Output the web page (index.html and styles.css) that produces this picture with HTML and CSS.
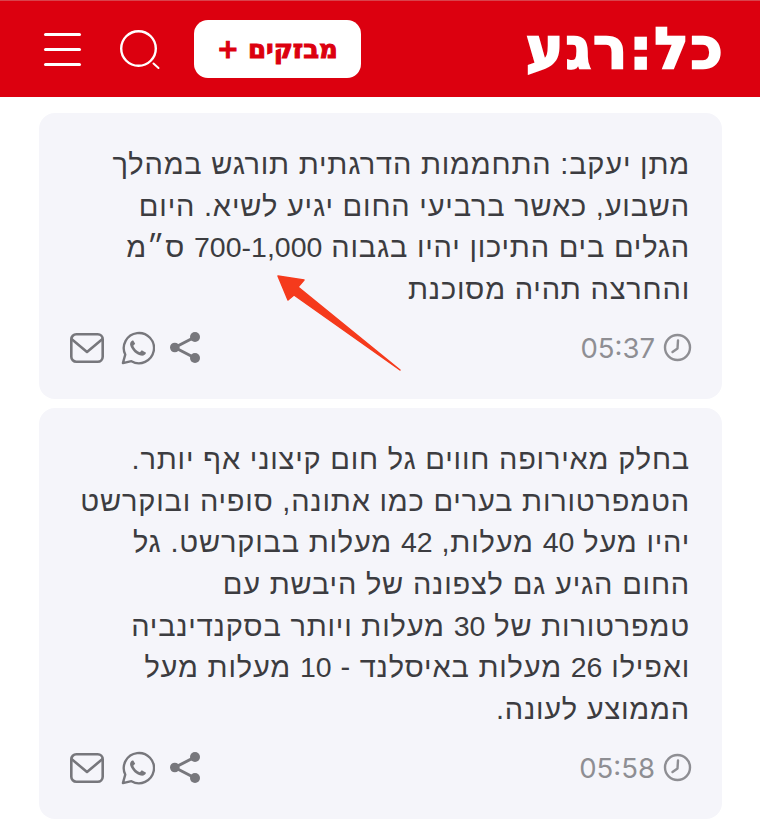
FILE: index.html
```html
<!DOCTYPE html>
<html lang="he" dir="rtl">

<head>
    <meta charset="UTF-8">
    <title>כל:רגע</title>
    <link rel="stylesheet" href="styles.css">
</head>

<body>
    <header class="topbar">
        <div class="logo">כל:רגע</div>
        <div class="topbar-tools">
            <a class="breaking-btn">מבזקים +</a>
            <svg class="search-icon" width="42" height="42" viewBox="0 0 42 42" fill="none" stroke="#fff">
                <circle cx="19.500" cy="20.500" r="17.300" stroke-width="2.400" />
                <path d="M34.500 35.500l5 4.500" stroke-width="2" stroke-linecap="round" />
            </svg>
            <div class="menu-icon"><span></span><span></span><span></span></div>
        </div>
    </header>

    <main class="feed">
        <article class="card">
            <p>מתן יעקב: התחממות הדרגתית תורגש במהלך השבוע, כאשר ברביעי החום יגיע לשיא. היום הגלים בים התיכון יהיו בגבוה <span class="num">700-1,000</span> ס״מ והחרצה תהיה מסוכנת</p>
            <div class="card-foot">
                <div class="time">
                    <svg width="29" height="29" viewBox="0 0 29 29" fill="none" stroke="#8e8e93" stroke-width="2.400">
                        <circle cx="14.500" cy="14.500" r="12.500" />
                        <path d="M15 7.500l-.500 8-5 3.500" stroke-linecap="round" stroke-linejoin="round" />
                    </svg>
                    <span>05:37</span>
                </div>
                <div class="share-icons">
                    <svg width="30" height="31" viewBox="0 0 30 31" fill="#77777c" stroke="#77777c">
                        <circle cx="25" cy="5" r="5" stroke="none" />
                        <circle cx="4.800" cy="15.500" r="4.800" stroke="none" />
                        <circle cx="25" cy="26" r="5" stroke="none" />
                        <path d="M25 5L4.800 15.500 25 26" fill="none" stroke-width="3" />
                    </svg>
                    <svg width="34" height="34" viewBox="0 0 36 36" fill="none" stroke="#77777c">
                        <path d="M2 34l2.500-9A16 16 0 1 1 11 32z" stroke-width="2.500" stroke-linejoin="round" />
                        <path d="M12 10c-2 1-3 3-2 6 2 5 6 9 11 10 3 .5 5-1 5.500-3l-4.500-2.500-2 2c-3-1-6-4-7-7l2-2-2-3.500z" fill="#77777c" stroke="none" />
                    </svg>
                    <svg class="mail-icon" width="34" height="30" viewBox="0 0 34 30" fill="none" stroke="#77777c" stroke-width="2.600">
                        <rect x="1.300" y="1.300" width="31.400" height="27.400" rx="5" />
                        <path d="M1.500 6L17 19 32.500 6" stroke-linejoin="round" />
                    </svg>
                </div>
            </div>
        </article>

        <article class="card">
            <p>בחלק מאירופה חווים גל חום קיצוני אף יותר. הטמפרטורות בערים כמו אתונה, סופיה ובוקרשט יהיו מעל <span class="num">40</span> מעלות, <span class="num">42</span> מעלות בבוקרשט. גל החום הגיע גם לצפונה של היבשת עם טמפרטורות של <span class="num">30</span> מעלות ויותר בסקנדינביה ואפילו <span class="num">26</span> מעלות באיסלנד - <span class="num">10</span> מעלות מעל הממוצע לעונה.</p>
            <div class="card-foot">
                <div class="time">
                    <svg width="29" height="29" viewBox="0 0 29 29" fill="none" stroke="#8e8e93" stroke-width="2.400">
                        <circle cx="14.500" cy="14.500" r="12.500" />
                        <path d="M15 7.500l-.500 8-5 3.500" stroke-linecap="round" stroke-linejoin="round" />
                    </svg>
                    <span>05:58</span>
                </div>
                <div class="share-icons">
                    <svg width="30" height="31" viewBox="0 0 30 31" fill="#77777c" stroke="#77777c">
                        <circle cx="25" cy="5" r="5" stroke="none" />
                        <circle cx="4.800" cy="15.500" r="4.800" stroke="none" />
                        <circle cx="25" cy="26" r="5" stroke="none" />
                        <path d="M25 5L4.800 15.500 25 26" fill="none" stroke-width="3" />
                    </svg>
                    <svg width="34" height="34" viewBox="0 0 36 36" fill="none" stroke="#77777c">
                        <path d="M2 34l2.500-9A16 16 0 1 1 11 32z" stroke-width="2.500" stroke-linejoin="round" />
                        <path d="M12 10c-2 1-3 3-2 6 2 5 6 9 11 10 3 .5 5-1 5.500-3l-4.500-2.500-2 2c-3-1-6-4-7-7l2-2-2-3.500z" fill="#77777c" stroke="none" />
                    </svg>
                    <svg class="mail-icon" width="34" height="30" viewBox="0 0 34 30" fill="none" stroke="#77777c" stroke-width="2.600">
                        <rect x="1.300" y="1.300" width="31.400" height="27.400" rx="5" />
                        <path d="M1.500 6L17 19 32.500 6" stroke-linejoin="round" />
                    </svg>
                </div>
            </div>
        </article>
    </main>

    <!-- red annotation arrow on top of the first card -->
    <svg class="arrow" width="130" height="100" viewBox="0 0 130 100">
        <path d="M3 1L29 5 23 12 125 95 19 20 13 25z" fill="#f53a1c" stroke="#f53a1c" stroke-width="1.500" stroke-linejoin="round" />
    </svg>
</body>

</html>
```

FILE: styles.css
```css
html {
    font-family: "Liberation Sans", sans-serif;
    background: #fff;
}

body {
    margin: 0;
    position: relative;
}

.topbar {
    height: 97px;
    box-sizing: border-box;
    background: #dc000f;
    border-top: 1px solid #d9434c;
    display: flex;
    align-items: center;
    justify-content: space-between;
    padding: 0 35px 0 44px;
}

.logo {
    color: #fff;
    font-family: "DejaVu Sans", sans-serif;
    font-size: 56px;
    font-weight: bold;
    line-height: 1;
    letter-spacing: 2.500px;
    -webkit-text-stroke: 2.500px #fff;
}

.topbar-tools {
    display: flex;
    align-items: center;
    gap: 33px;
}

.breaking-btn {
    width: 167px;
    height: 58px;
    background: #fff;
    border-radius: 14px;
    color: #dc000f;
    font-family: "DejaVu Sans", sans-serif;
    font-size: 26px;
    font-weight: bold;
    -webkit-text-stroke: 1px #dc000f;
    display: flex;
    align-items: center;
    justify-content: center;
}

.search-icon {
    display: block;
    margin-left: 5px;
}

.menu-icon {
    width: 37px;
    display: flex;
    flex-direction: column;
    gap: 12px;
}

.menu-icon span {
    height: 3px;
    background: #fff;
    border-radius: 2px;
}

.feed {
    display: flex;
    flex-direction: column;
    gap: 9px;
    margin: 16px 38px 0 39px;
}

.card {
    background: #f5f5fa;
    border-radius: 16px;
    padding: 31px 32px 34px 31px;
}

.card p {
    margin: 0;
    color: #3c3c40;
    font-size: 29px;
    letter-spacing: .8px;
    line-height: 41.700px;
}

.card p .num {
    font-size: 28.500px;
    letter-spacing: 0;
}

.card-foot {
    display: flex;
    justify-content: space-between;
    align-items: center;
    margin: 20px -2px 0 0;
}

.time {
    display: flex;
    align-items: center;
    gap: 8px;
    color: #8e8e93;
    font-family: Inter, sans-serif;
    font-size: 27.500px;
}

.time svg,
.share-icons svg {
    display: block;
}

.share-icons {
    display: flex;
    align-items: center;
    gap: 15px;
}

.share-icons .mail-icon {
    margin-right: 2px;
}

.arrow {
    position: absolute;
    left: 275px;
    top: 275px;
}
```
